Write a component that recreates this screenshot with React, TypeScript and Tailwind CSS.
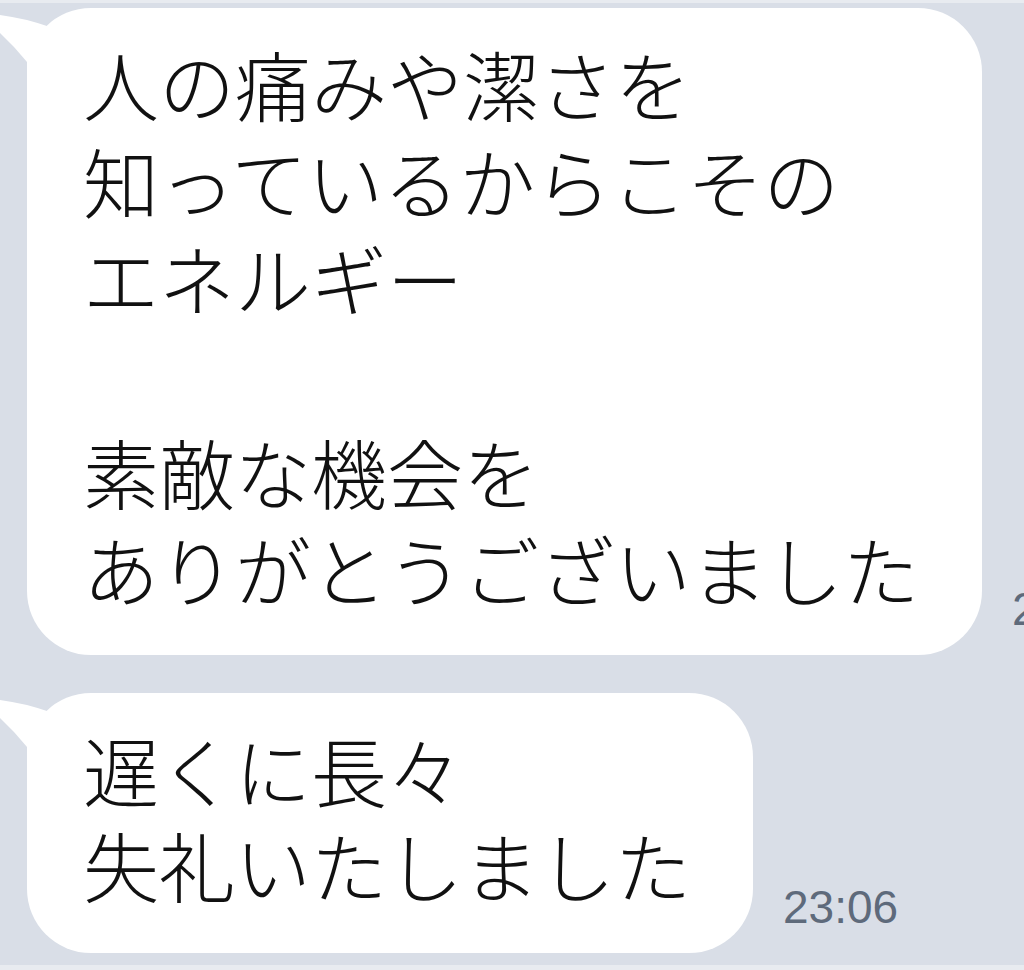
const jp = { fontFamily: '"Noto Sans CJK JP", "Noto Sans", sans-serif' };

function Tail() {
  return (
    <svg
      className="absolute left-[-27px] top-0"
      width="80"
      height="80"
      viewBox="0 0 80 80"
    >
      <path d="M0,7 Q24,10 50,19 L70,60 L27,72 L27,54 Q14,38 0,25 Z" fill="#ffffff" />
    </svg>
  );
}

type BubbleProps = {
  lines: string[];
  width: string;
  time: string;
  pad: string;
  leading: string;
};

function Bubble({ lines, width, time, pad, leading }: BubbleProps) {
  return (
    <div className="flex items-end">
      <div className={`relative shrink-0 rounded-[64px] bg-white pl-[56px] ${width} ${pad}`}>
        <Tail />
        <div className={`relative text-[76px] font-light text-[#111111] ${leading}`} style={jp}>
          {lines.map((l, i) => (
            <div key={i}>{l === '' ? '\u00a0' : l}</div>
          ))}
        </div>
      </div>
      <div
        className="ml-[30px] mb-[23px] shrink-0 whitespace-nowrap text-[46px] leading-none text-[#5e6a7b]"
        style={{ fontFamily: '"Liberation Sans", Arial, sans-serif' }}
      >
        {time}
      </div>
    </div>
  );
}

export default function App() {
  return (
    <div className="flex h-[970px] w-[1024px] flex-col overflow-hidden bg-[#d9dee7]">
      <div className="h-[3px] shrink-0 bg-[#e8ebf0]" />
      <div className="flex flex-col gap-[38px] pl-[27px] pt-[5px]">
        <Bubble
          width="w-[955px]"
          pad="pt-[27px] pb-[38px]"
          leading="leading-[97px]"
          time="23:06"
          lines={[
            '人の痛みや潔さを',
            '知っているからこその',
            'エネルギー',
            '',
            '素敵な機会を',
            'ありがとうございました',
          ]}
        />
        <Bubble
          width="w-[726px]"
          pad="pt-[29px] pb-[41px]"
          leading="leading-[95px]"
          time="23:06"
          lines={['遅くに長々', '失礼いたしました']}
        />
      </div>
      <div className="flex-1" />
      <div className="h-[5px] shrink-0 bg-[#e8ebf0]" />
    </div>
  );
}
